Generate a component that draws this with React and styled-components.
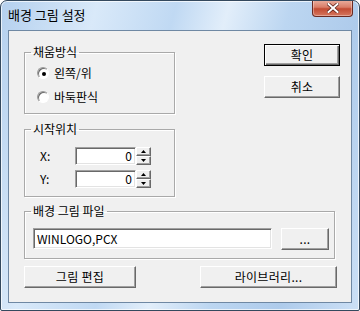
import React from "react";
import styled, { createGlobalStyle } from "styled-components";

const Global = createGlobalStyle`
  html, body { margin: 0; padding: 0; background: #ffffff; }
  body { font-family: "Noto Sans CJK KR", "Liberation Sans", sans-serif; }
`;

const FONT = `"Noto Sans CJK KR", "Liberation Sans", sans-serif`;

const Window = styled.div`
  width: 360px;
  height: 311px;
  box-sizing: border-box;
  border: 1px solid #34495e;
  border-radius: 7px 7px 2px 2px;
  background: linear-gradient(105deg, #b4d0ee 0%, #d9e9f9 22%, #c0d9f3 40%, #e2eefa 52%, #bcd6f1 66%, #aecbeb 82%, #cce0f6 100%);
  display: flex;
  flex-direction: column;
  overflow: hidden;
  box-shadow: inset 0 0 0 1px rgba(255,255,255,0.7);
`;

const TitleBar = styled.div`
  height: 29px;
  display: flex;
  align-items: flex-start;
  justify-content: space-between;
  padding-left: 7px;
`;

const TitleText = styled.span`
  font-family: ${FONT};
  font-size: 13px;
  line-height: 15px;
  margin-top: 6px;
  color: #000;
`;

const CloseButton = styled.div`
  width: 41px;
  height: 17px;
  margin-right: 6px;
  margin-top: -1px;
  box-sizing: border-box;
  border: 1px solid #6b2a22;
  border-top: none;
  border-radius: 0 0 4px 4px;
  background: linear-gradient(180deg, #eab0a0 0%, #d97d68 45%, #c24b33 55%, #d6775f 100%);
  display: flex;
  align-items: center;
  justify-content: center;
  box-shadow: inset 0 0 0 1px rgba(255,255,255,0.35);
`;

const Client = styled.div`
  flex: 1;
  margin: 0 7px 7px 7px;
  border: 1px solid #6f88a3;
  background: #f0f0f0;
  padding: 14px 0 0 15px;
  display: flex;
  flex-direction: column;
  font-family: ${FONT};
  font-size: 12px;
  color: #000;
`;

const TopRow = styled.div`
  display: flex;
  align-items: flex-start;
`;

const LeftCol = styled.div`
  width: 151px;
  display: flex;
  flex-direction: column;
  gap: 8px;
`;

const RightCol = styled.div`
  margin-left: 89px;
  margin-top: -1px;
  display: flex;
  flex-direction: column;
  gap: 10px;
`;

const Group = styled.fieldset`
  margin: ${p => p.$mt || "0"} 0 0 0;
  padding: ${p => p.$pad || "6px 0 8px 12px"};
  border: 1px solid #a9a9a9;
  box-shadow: 1px 1px 0 #ffffff, inset 1px 1px 0 #ffffff;
  min-width: 0;
  box-sizing: border-box;
  width: ${p => p.$w || "151px"};
`;

const Legend = styled.legend`
  font-family: ${FONT};
  font-size: 12px;
  line-height: 14px;
  padding: 0 2px;
  margin-left: ${p => p.$offset};
`;

const RadioList = styled.div`
  display: flex;
  flex-direction: column;
  gap: 8px;
`;

const RadioRow = styled.label`
  display: flex;
  align-items: center;
  height: 16px;
  gap: 5px;
  line-height: 16px;
`;

const RadioCircle = styled.span`
  width: 12px;
  height: 12px;
  box-sizing: border-box;
  border-radius: 50%;
  border: 1px solid;
  border-color: #9a9a9a #ffffff #ffffff #9a9a9a;
  background: #ffffff;
  box-shadow: inset 1px 1px 0 #6a6a6a;
  display: flex;
  align-items: center;
  justify-content: center;
  &::after {
    content: "";
    width: 4px;
    height: 4px;
    border-radius: 50%;
    background: ${p => (p.$checked ? "#000" : "transparent")};
    margin: 1px 0 0 1px;
  }
`;

const FieldRows = styled.div`
  display: flex;
  flex-direction: column;
  gap: 5px;
`;

const FieldRow = styled.div`
  display: flex;
  align-items: center;
  height: 18px;
`;

const FieldLabel = styled.span`
  width: 35px;
  line-height: 18px;
`;

const Spin = styled.div`
  display: flex;
  height: 18px;
`;

const Sunken = styled.div`
  box-sizing: border-box;
  width: ${p => p.$w};
  height: ${p => p.$h};
  border: 1px solid;
  border-color: #a0a0a0 #ffffff #ffffff #a0a0a0;
  box-shadow: inset 1px 1px 0 #696969, inset -1px -1px 0 #e3e3e3;
  background: #ffffff;
  display: flex;
  align-items: center;
  justify-content: ${p => (p.$right ? "flex-end" : "flex-start")};
  padding: 0 3px;
  line-height: 16px;
  font-size: 12px;
  overflow: hidden;
  white-space: nowrap;
`;

const SpinButtons = styled.div`
  width: 15px;
  display: flex;
  flex-direction: column;
`;

const SpinBtn = styled.div`
  flex: 1;
  box-sizing: border-box;
  background: #f0f0f0;
  border: 1px solid;
  border-color: #ffffff #696969 #696969 #ffffff;
  box-shadow: inset -1px -1px 0 #a0a0a0;
  display: flex;
  align-items: center;
  justify-content: center;
`;

const Button = styled.button`
  box-sizing: border-box;
  width: ${p => p.$w};
  height: 22px;
  padding: 0;
  font-family: ${FONT};
  font-size: 12px;
  line-height: 14px;
  color: #000;
  background: #f0f0f0;
  border: 1px solid;
  border-color: ${p => (p.$default ? "#000" : "#ffffff #696969 #696969 #ffffff")};
  box-shadow: ${p =>
    p.$default
      ? "inset 1px 1px 0 #ffffff, inset -1px -1px 0 #696969, inset -2px -2px 0 #a0a0a0"
      : "inset -1px -1px 0 #a0a0a0"};
  display: flex;
  align-items: center;
  justify-content: center;
  letter-spacing: 0.3px;
`;

const FileRow = styled.div`
  display: flex;
  align-items: flex-start;
  gap: 9px;
`;

const BottomRow = styled.div`
  display: flex;
  margin-top: 7px;
  gap: 64px;
`;

const Arrow = ({ up }) => (
  <svg width="5" height="3" viewBox="0 0 5 3">
    <polygon points={up ? "2.5,0 5,3 0,3" : "0,0 5,0 2.5,3"} fill="#000" />
  </svg>
);

const SpinField = ({ value }) => (
  <Spin>
    <Sunken $w="61px" $h="18px" $right>{value}</Sunken>
    <SpinButtons>
      <SpinBtn><Arrow up /></SpinBtn>
      <SpinBtn><Arrow /></SpinBtn>
    </SpinButtons>
  </Spin>
);

export default function App() {
  return (
    <>
      <Global />
      <Window>
        <TitleBar>
          <TitleText>배경 그림 설정</TitleText>
          <CloseButton>
            <svg width="12" height="10" viewBox="0 0 12 10">
              <path d="M1.5 1 L10.5 9 M10.5 1 L1.5 9" stroke="#5a2018" strokeWidth="3.4" strokeLinecap="square" />
              <path d="M1.5 1 L10.5 9 M10.5 1 L1.5 9" stroke="#ffffff" strokeWidth="2" strokeLinecap="square" />
            </svg>
          </CloseButton>
        </TitleBar>
        <Client>
          <TopRow>
            <LeftCol>
              <Group>
                <Legend $offset="-6px">채움방식</Legend>
                <RadioList>
                  <RadioRow><RadioCircle $checked />왼쪽/위</RadioRow>
                  <RadioRow><RadioCircle />바둑판식</RadioRow>
                </RadioList>
              </Group>
              <Group $pad="11px 0 8px 15px">
                <Legend $offset="-9px">시작위치</Legend>
                <FieldRows>
                  <FieldRow><FieldLabel>X:</FieldLabel><SpinField value="0" /></FieldRow>
                  <FieldRow><FieldLabel>Y:</FieldLabel><SpinField value="0" /></FieldRow>
                </FieldRows>
              </Group>
            </LeftCol>
            <RightCol>
              <Button $w="76px" $default>확인</Button>
              <Button $w="76px">취소</Button>
            </RightCol>
          </TopRow>
          <Group $w="311px" $pad="10px 0 8px 8px" $mt="7px">
            <Legend $offset="-2px">배경 그림 파일</Legend>
            <FileRow>
              <Sunken $w="239px" $h="21px">WINLOGO,PCX</Sunken>
              <Button $w="48px">...</Button>
            </FileRow>
          </Group>
          <BottomRow>
            <Button $w="112px">그림 편집</Button>
            <Button $w="137px">라이브러리...</Button>
          </BottomRow>
        </Client>
      </Window>
    </>
  );
}
